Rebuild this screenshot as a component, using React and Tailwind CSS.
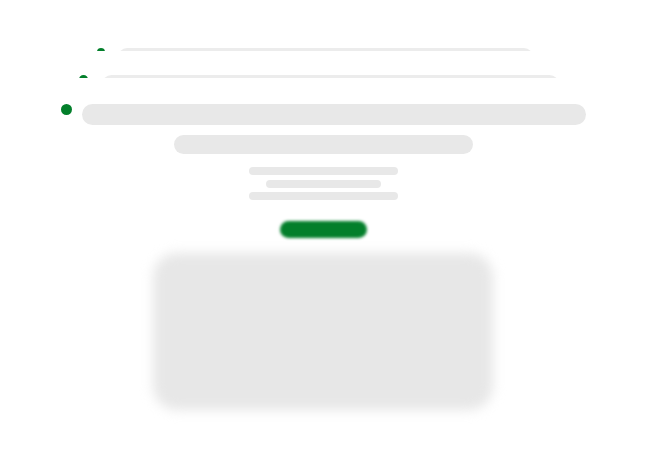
import React from 'react';

const Dot = ({ size }) => (
    <div className="shrink-0 rounded-full bg-[#037f2b]" style={{ width: size, height: size }} />
);

const App = () => {
    return (
        <div className="min-h-screen w-full bg-white pt-[48px]" style={{ fontFamily: '"Liberation Sans", sans-serif' }}>
            {/* stacked cards behind, only the top edge shows */}
            <div className="flex h-[3px] items-start overflow-hidden pl-[97px]">
                <Dot size={8} />
                <div className="ml-[13px] h-[18px] w-[415px] rounded-full bg-[#ececec]" />
            </div>
            <div className="mt-[24px] flex h-[3px] items-start overflow-hidden pl-[79px]">
                <Dot size={9} />
                <div className="ml-[14px] h-[19px] w-[457px] rounded-full bg-[#ececec]" />
            </div>

            {/* front card */}
            <div className="mt-[26px] flex items-start pl-[61px]">
                <Dot size={11} />
                <div className="ml-[10px] h-[21px] w-[504px] rounded-full bg-[#e8e8e8]" />
            </div>
            <div className="ml-[174px] mt-[10px] h-[19px] w-[299px] rounded-full bg-[#e8e8e8]" />

            <div className="mt-[13px] flex flex-col">
                <div className="ml-[249px] h-[8px] w-[149px] rounded-full bg-[#e8e8e8]" />
                <div className="ml-[266px] mt-[5px] h-[8px] w-[115px] rounded-full bg-[#e8e8e8]" />
                <div className="ml-[249px] mt-[4px] h-[8px] w-[149px] rounded-full bg-[#e8e8e8]" />
            </div>

            <div className="ml-[280px] mt-[21px] h-[17px] w-[87px] rounded-full bg-[#037f2b] blur-[1.5px]" />

            <div className="ml-[153px] mt-[15px] h-[157px] w-[340px] rounded-[24px] bg-[#e7e7e7] blur-[6px]" />
        </div>
    );
};

export default App;
